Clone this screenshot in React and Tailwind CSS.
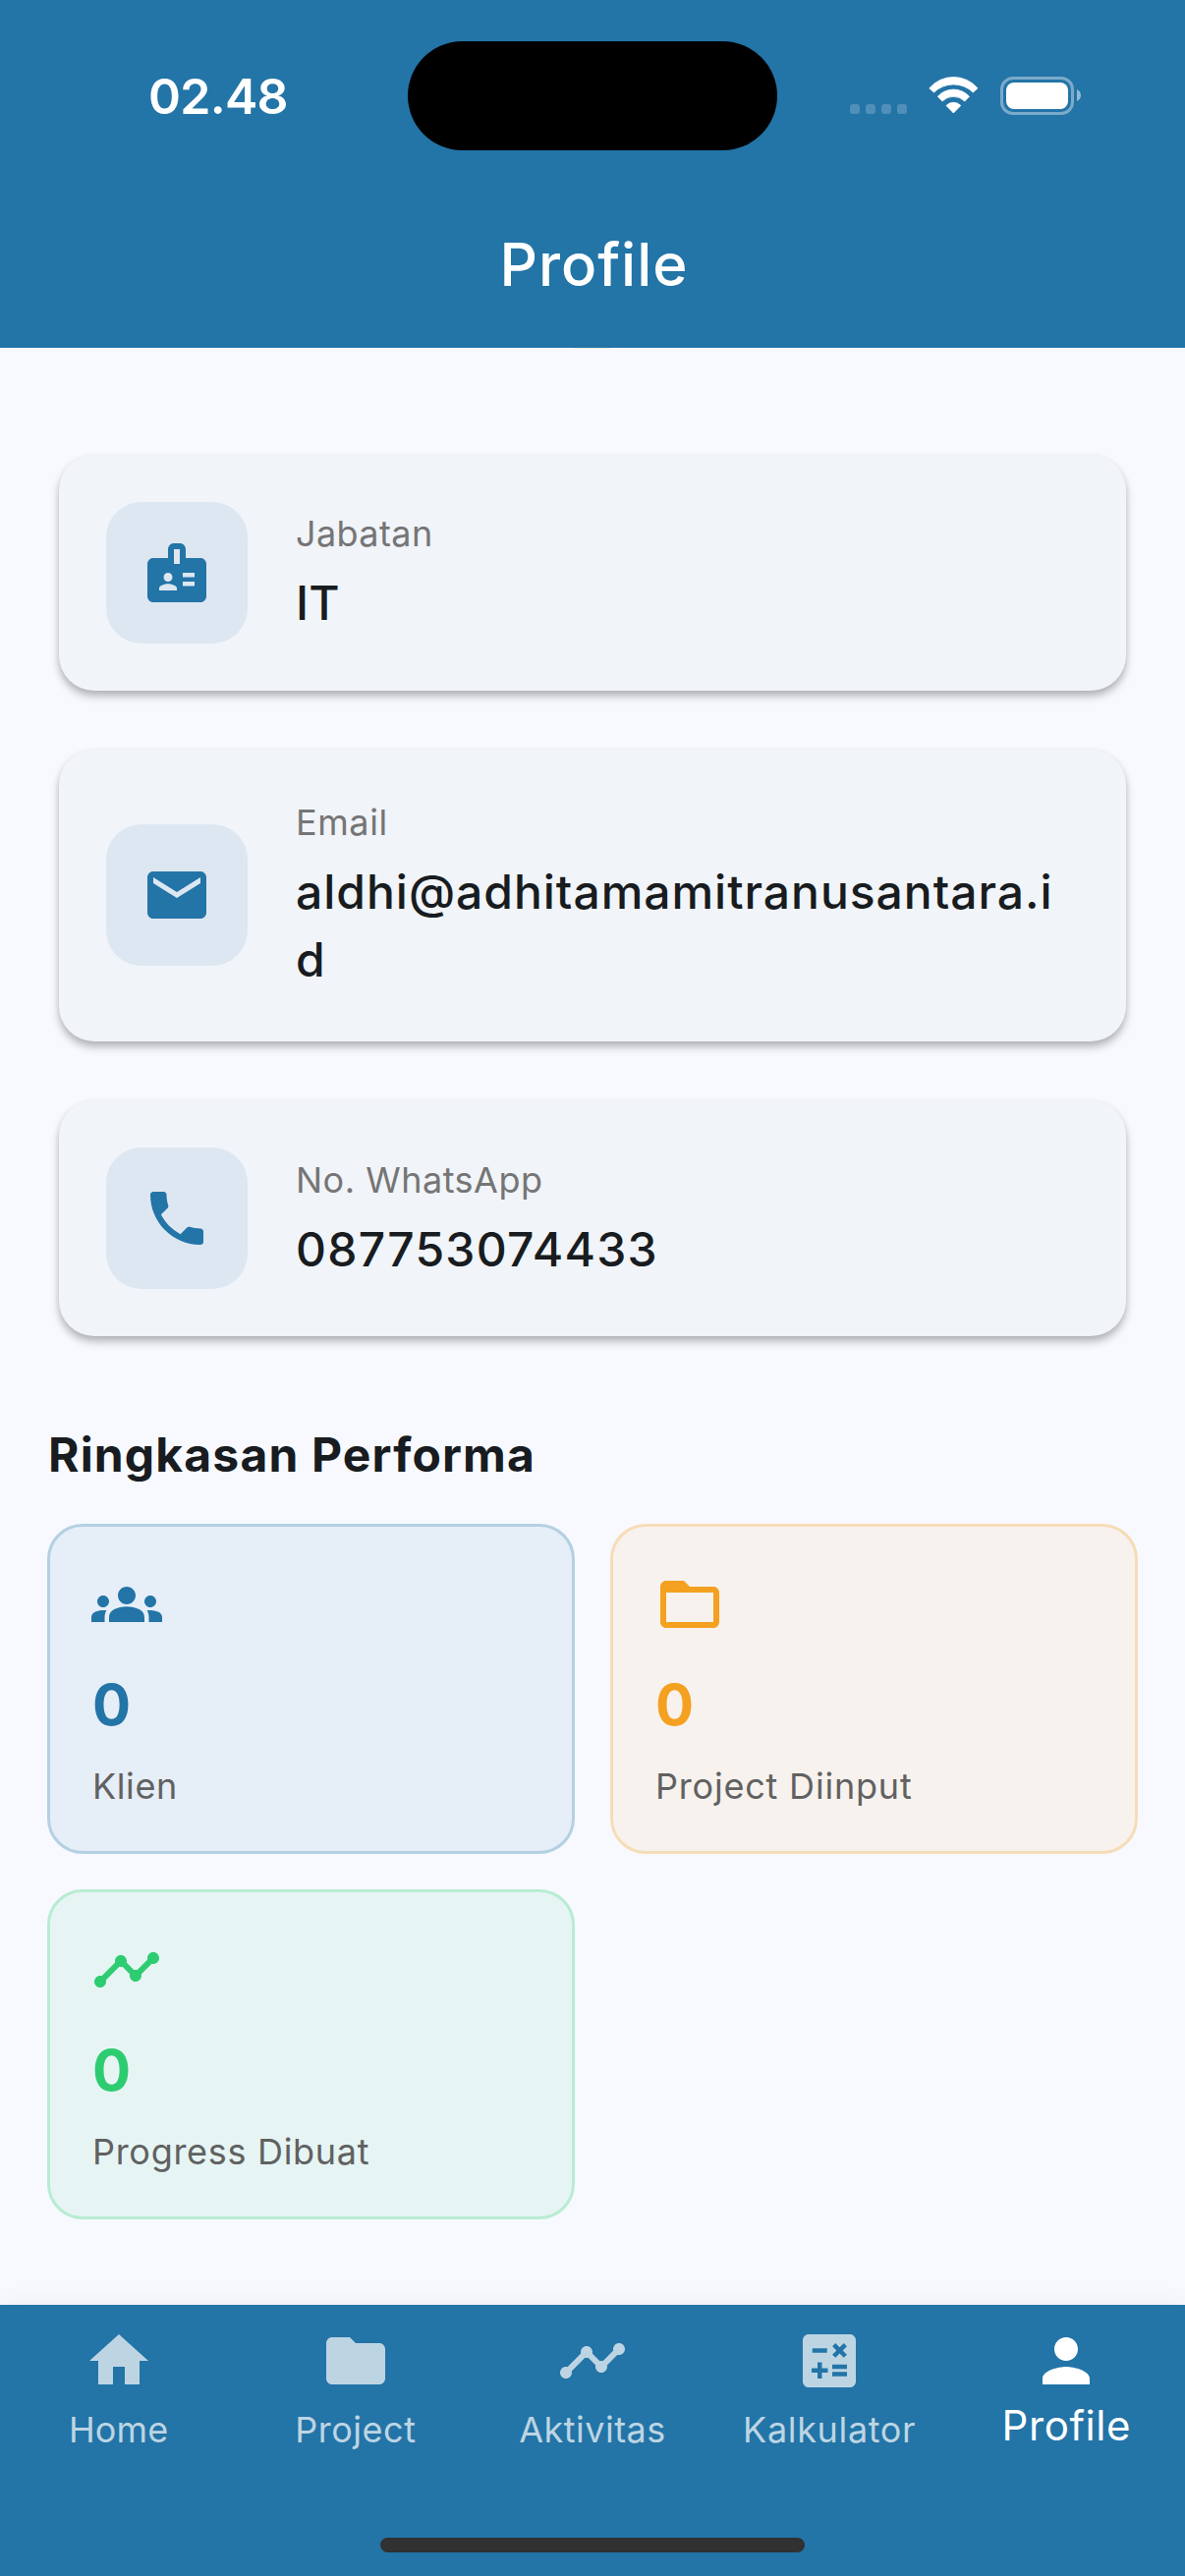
import {
  MdBadge,
  MdCalculate,
  MdEmail,
  MdFolder,
  MdFolderOpen,
  MdGroups,
  MdHome,
  MdPerson,
  MdPhone,
  MdTimeline,
} from "react-icons/md";

const infoCards = [
  { label: "Jabatan", value: "IT", Icon: MdBadge, height: "h-[240px]", textPad: "pb-0.5", labelTracking: "tracking-[0.4px]", valueTracking: "tracking-[0.2px]" },
  { label: "Email", value: "aldhi@adhitamamitranusantara.id", Icon: MdEmail, height: "h-[297px] pb-px", textPad: "pb-px", labelTracking: "tracking-[0.6px]", valueTracking: "tracking-[0.98px]" },
  { label: "No. WhatsApp", value: "087753074433", Icon: MdPhone, height: "h-[240px]", textPad: "pb-0", labelTracking: "tracking-[0.5px]", valueTracking: "tracking-[1.23px]" },
];

const stats = [
  { label: "Klien", Icon: MdGroups, box: "bg-[#e6eef7] border-[#b4d0e3]", color: "text-[#2374a7]", tracking: "tracking-[0.6px]" },
  { label: "Project Diinput", Icon: MdFolderOpen, box: "bg-[#f7f2ee] border-[#f6ddb7]", color: "text-[#f4a020]", tracking: "tracking-[0.8px]" },
  { label: "Progress Dibuat", Icon: MdTimeline, box: "bg-[#e6f5f4] border-[#b8ecd2]", color: "text-[#2ecc71]", tracking: "tracking-[0.7px]" },
];

const tabs = [
  { label: "Home", Icon: MdHome, tracking: "tracking-[0.14px]" },
  { label: "Project", Icon: MdFolder, tracking: "tracking-[0.53px]" },
  { label: "Aktivitas", Icon: MdTimeline, tracking: "tracking-[0.5px]" },
  { label: "Kalkulator", Icon: MdCalculate, tracking: "tracking-[0.65px]" },
  { label: "Profile", Icon: MdPerson, tracking: "tracking-[0.58px]", active: true },
];

function StatusBar() {
  return (
    <div className="grid h-[186px] grid-cols-[415px_376px_415px] items-center pt-2">
      <div className="pt-0.5 pl-[151px] text-[50px] leading-[60px] font-semibold tracking-[-0.7px]">02.48</div>
      <div className="h-[111px] rounded-full bg-black" />
      <div className="flex h-[39px] items-center pl-[74px]">
        <div className="flex gap-1.5 self-end pb-px">
          {[0, 1, 2, 3].map((i) => (
            <span key={i} className="size-2.5 rounded-[3px] bg-white/20" />
          ))}
        </div>
        <svg className="ml-[22px] h-[38px] w-[51px]" viewBox="0 0 51 38" fill="#fff" stroke="#fff" strokeWidth="0.8" strokeLinejoin="round">
          <path d="M0.8 11.8A32.3 32.3 0 0 1 50 11.8L45.3 16A28.5 28.5 0 0 0 5.5 16Z" />
          <path d="M9.3 20.2A21.8 21.8 0 0 1 41.5 20.2L36.8 25A16.2 16.2 0 0 0 14 25Z" />
          <path d="M18 29.4A10.4 10.4 0 0 1 32.8 29.4L25.4 37Z" />
        </svg>
        <div className="ml-[22px] h-[39px] w-[75px] rounded-[13px] border-[3px] border-white/40 p-[3px]">
          <div className="h-full rounded-[8px] bg-white" />
        </div>
        <svg className="ml-[3px] h-3 w-1" viewBox="0 0 4 12" fill="#fff" fillOpacity="0.5">
          <path d="M0 0C2.4 1 4 3.2 4 6S2.4 11 0 12Z" />
        </svg>
      </div>
    </div>
  );
}

function InfoCard({ label, value, Icon, height, textPad, labelTracking, valueTracking }) {
  return (
    <div className={`flex items-center rounded-[36px] bg-[#f1f4f9] px-12 shadow-[0_6px_8px_rgba(0,0,0,0.24),0_2px_6px_rgba(0,0,0,0.08)] ${height}`}>
      <div className="flex size-36 shrink-0 items-center justify-center rounded-[36px] bg-[#dde7f1] text-[#2374a7]">
        <Icon className="size-[72px]" />
      </div>
      <div className={`ml-12 flex-1 pr-3 pl-px ${textPad}`}>
        <div className={`text-[36px] leading-[52px] text-[#757575] ${labelTracking}`}>{label}</div>
        <div className={`mt-2.5 text-[48px] leading-[69px] font-medium break-all text-[#181c20] ${valueTracking}`}>{value}</div>
      </div>
    </div>
  );
}

function StatTile({ label, Icon, box, color, tracking }) {
  return (
    <div className={`h-[336px] rounded-[36px] border-[3px] px-[42px] pt-[43px] ${box}`}>
      <Icon className={`size-[72px] ${color}`} />
      <div className={`mt-[23px] pl-px text-[58px] leading-[86px] font-bold ${color}`}>0</div>
      <div className={`mt-3.5 pl-px text-[36px] leading-[52px] text-[#616161] ${tracking}`}>{label}</div>
    </div>
  );
}

export default function App() {
  return (
    <div className="flex h-[2622px] w-[1206px] flex-col overflow-hidden bg-[#f7f9ff] font-['Inter',sans-serif]">
      <header className="h-[354px] bg-[#2374a7] text-white">
        <StatusBar />
        <h1 className="pl-[3px] text-center text-[60px] leading-[166px] font-medium tracking-[0.97px]">Profile</h1>
      </header>

      <main className="flex-1">
        <div className="mx-auto h-px w-10 bg-[#f8ecdf]" />
        <section className="mt-[108px] flex flex-col gap-[60px] px-[60px]">
          {infoCards.map((card) => (
            <InfoCard key={card.label} {...card} />
          ))}
        </section>
        <section className="mt-[86px] px-12">
          <h2 className="pl-px text-[48px] leading-[69px] font-bold tracking-[1.15px] text-[#181c20]">Ringkasan Performa</h2>
          <div className="mt-[36px] grid grid-cols-2 gap-9">
            {stats.map((stat) => (
              <StatTile key={stat.label} {...stat} />
            ))}
          </div>
        </section>
      </main>

      <nav className="flex h-[276px] flex-col justify-between bg-[#2374a7] pt-[21px] pb-6 shadow-[0_0_24px_rgba(0,0,0,0.05)]">
        <div className="grid grid-cols-5">
          {tabs.map(({ label, Icon, tracking, active }) => (
            <div key={label} className={`flex flex-col items-center ${active ? "text-white" : "text-[#bdd5e3]"}`}>
              <Icon className="size-[72px]" />
              <span className={`${active ? "text-[42px] leading-[60px]" : "mt-2 text-[36px] leading-[52px]"} ${tracking}`}>{label}</span>
            </div>
          ))}
        </div>
        <div className="h-[15px] w-[432px] self-center rounded-full bg-[#313131]" />
      </nav>
    </div>
  );
}
